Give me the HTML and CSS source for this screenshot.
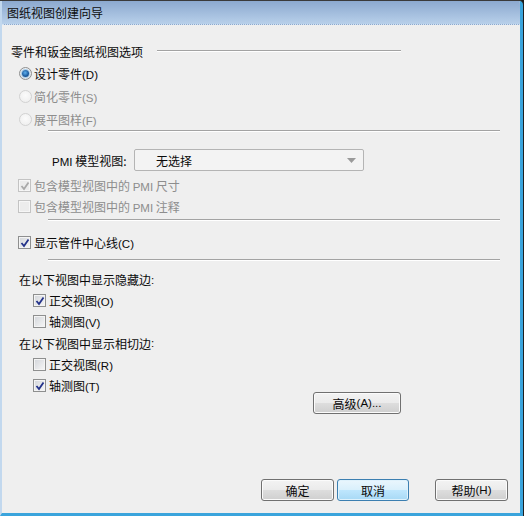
FILE: index.html
```html
<!DOCTYPE html>
<html lang="zh-CN">
<head>
<meta charset="utf-8">
<title>图纸视图创建向导</title>
<link rel="stylesheet" href="styles.css">
</head>
<body>
<div class="window">
  <div class="frame">
    <div class="titlebar">图纸视图创建向导</div>
    <div class="content">
      <div class="group-head">
        <span class="group-title">零件和钣金图纸视图选项</span>
        <span class="group-line"></span>
      </div>
      <div class="row radio-row">
        <span class="radio checked"></span><span class="lbl">设计零件<span class="acc">(D)</span></span>
      </div>
      <div class="row radio-row disabled">
        <span class="radio"></span><span class="lbl">简化零件<span class="acc">(S)</span></span>
      </div>
      <div class="row radio-row disabled">
        <span class="radio"></span><span class="lbl">展平图样<span class="acc">(F)</span></span>
      </div>
      <div class="sep"></div>

      <div class="pmi-row">
        <span class="pmi-label"><span class="acc">PMI</span> 模型视图:</span>
        <div class="select">
          <span class="select-text">无选择</span>
          <svg class="select-arrow" width="9" height="5" viewBox="0 0 9 5"><path d="M0 0H9L4.5 5Z" fill="#9a9a9a"/></svg>
        </div>
      </div>
      <div class="row check-row disabled first-check">
        <span class="check on"><svg width="10" height="10" viewBox="0 0 10 10"><path d="M1.5 5L4 8L8.5 1.5" fill="none" stroke="#a9a9a9" stroke-width="1.8"/></svg></span><span class="lbl">包含模型视图中的 <span class="acc">PMI</span> 尺寸</span>
      </div>
      <div class="row check-row disabled">
        <span class="check"></span><span class="lbl">包含模型视图中的 <span class="acc">PMI</span> 注释</span>
      </div>
      <div class="sep sep-b"></div>

      <div class="row check-row pipe-row">
        <span class="check on"><svg width="10" height="10" viewBox="0 0 10 10"><path d="M1.5 5L4 8L8.5 1.5" fill="none" stroke="#23328a" stroke-width="1.8"/></svg></span><span class="lbl">显示管件中心线<span class="acc">(C)</span></span>
      </div>
      <div class="sep sep-c"></div>

      <div class="row section-label first-label">在以下视图中显示隐藏边<span class="acc">:</span></div>
      <div class="row check-row nested">
        <span class="check on"><svg width="10" height="10" viewBox="0 0 10 10"><path d="M1.5 5L4 8L8.5 1.5" fill="none" stroke="#23328a" stroke-width="1.8"/></svg></span><span class="lbl">正交视图<span class="acc">(O)</span></span>
      </div>
      <div class="row check-row nested">
        <span class="check"></span><span class="lbl">轴测图<span class="acc">(V)</span></span>
      </div>
      <div class="row section-label second-label">在以下视图中显示相切边<span class="acc">:</span></div>
      <div class="row check-row nested">
        <span class="check"></span><span class="lbl">正交视图<span class="acc">(R)</span></span>
      </div>
      <div class="row check-row nested">
        <span class="check on"><svg width="10" height="10" viewBox="0 0 10 10"><path d="M1.5 5L4 8L8.5 1.5" fill="none" stroke="#23328a" stroke-width="1.8"/></svg></span><span class="lbl">轴测图<span class="acc">(T)</span></span>
      </div>
      <div class="adv-row">
        <button class="btn adv">高级<span class="acc">(A)...</span></button>
      </div>

      <div class="footer">
        <button class="btn ok">确定</button>
        <button class="btn focused">取消</button>
        <button class="btn help">帮助<span class="acc">(H)</span></button>
      </div>
    </div>
  </div>
</div>
</body>
</html>
```

FILE: styles.css
```css
* { box-sizing: border-box; }

html, body {
  margin: 0;
  padding: 0;
  background: #1b1b1b;
}

body {
  width: 524px;
  height: 516px;
  font-family: "Noto Sans CJK SC", "Liberation Sans", sans-serif;
  font-size: 12px;
  color: #0a0a0a;
}

.window {
  width: 524px;
  height: 516px;
  border-top: 1px solid #3a3a3a;
  border-right: 1px solid #1e1e1e;
  border-bottom: 1px solid #1e1e1e;
  border-top-right-radius: 5px;
  background: #1e1e1e;
}

.frame {
  width: 523px;
  height: 515px;
  display: flex;
  flex-direction: column;
  background: #efefef;
  border-left: 2px solid #c2d8ee;
  border-right: 3px solid #3aa4dc;
  border-bottom: 3px solid #3aa4dc;
  border-top-right-radius: 4px;
  overflow: hidden;
}

.titlebar {
  height: 24px;
  flex: none;
  display: flex;
  align-items: center;
  padding-left: 5px;
  padding-bottom: 1px;
  background: linear-gradient(#8ca9cf, #b8d0ea);
  border-bottom: 1px dotted #d5e3f2;
  color: #0d0d0d;
  font-size: 12px;
}

.content {
  flex: 1;
  display: flex;
  flex-direction: column;
  padding: 15px 12px 12px 8px;
}

.acc {
  font-family: "Liberation Sans", "DejaVu Sans", sans-serif;
  font-size: 11.5px;
}

.group-head {
  height: 22px;
  display: flex;
  align-items: center;
  margin-left: 1px;
}

.group-title { white-space: nowrap; }

.group-line {
  width: 244px;
  margin-left: 14px;
  height: 2px;
  border-top: 1px solid #a3a3a3;
  border-bottom: 1px solid #ffffff;
}

.row {
  display: flex;
  align-items: center;
  white-space: nowrap;
}

.radio-row {
  height: 23px;
  margin-left: 9px;
}

.disabled { color: #8d8d8d; }

.radio {
  width: 13px;
  height: 13px;
  flex: none;
  border-radius: 50%;
  border: 1px solid #8e8f8f;
  background: radial-gradient(circle at 50% 40%, #ffffff, #d6d9de);
  margin-right: 2px;
  position: relative;
}

.radio.checked::after {
  content: "";
  position: absolute;
  left: 2px;
  top: 2px;
  width: 7px;
  height: 7px;
  border-radius: 50%;
  background: radial-gradient(circle at 45% 40%, #5fb0ee, #1a5a9e 60%, #0d3f78);
  box-shadow: 0 0 0 1px #a8cdea;
}

.disabled .radio {
  border-color: #d2d2d2;
  background: radial-gradient(circle at 50% 40%, #fbfbfb, #ececec);
}

.sep {
  height: 2px;
  margin-left: 38px;
  width: 452px;
  border-top: 1px solid #a3a3a3;
  border-bottom: 1px solid #ffffff;
  margin-top: -1px;
}

.pmi-row {
  margin-top: 17px;
  height: 22px;
  display: flex;
  align-items: center;
  margin-left: 42px;
}

.pmi-label {
  width: 82px;
  white-space: nowrap;
}

.select {
  width: 230px;
  height: 22px;
  border: 1px solid #b4b4b4;
  border-radius: 2px;
  background: #f3f3f3;
  display: flex;
  align-items: center;
  padding-left: 21px;
  padding-right: 7px;
  color: #0a0a0a;
}

.select-text { flex: 1; }

.select-arrow { flex: none; }

.check-row {
  height: 21px;
  margin-left: 8px;
}

.first-check { margin-top: 4px; }

.check {
  width: 13px;
  height: 13px;
  flex: none;
  border: 1px solid #8e8f8f;
  background: linear-gradient(135deg, #d2d5da, #f7f7f7);
  box-shadow: inset 0 0 0 1px #f4f4f4;
  margin-right: 3px;
  display: flex;
  align-items: center;
  justify-content: center;
}

.disabled .check {
  border-color: #c3c3c3;
  background: #ececec;
  box-shadow: inset 0 0 0 1px #f6f6f6;
}

.sep-b { margin-top: 2px; }

.pipe-row { margin-top: 11px; }

.sep-c { margin-top: 6px; }

.section-label {
  margin-left: 9px;
  height: 21px;
}

.first-label { margin-top: 8px; }

.second-label { height: 22px; }

.nested { margin-left: 23px; }

.adv-row {
  display: flex;
  margin-top: -4px;
  padding-left: 303px;
}

.btn {
  font-family: "Noto Sans CJK SC", "Liberation Sans", sans-serif;
  font-size: 12px;
  color: #0a0a0a;
  height: 22px;
  border: 1px solid #707070;
  border-radius: 3px;
  background: linear-gradient(#f3f3f3 0%, #ebebeb 48%, #dddddd 52%, #cfcfcf 100%);
  box-shadow: inset 0 0 0 1px #fbfbfb;
  padding: 0;
  display: flex;
  align-items: center;
  justify-content: center;
}

.adv { width: 88px; }

.footer {
  margin-top: auto;
  display: flex;
  justify-content: flex-end;
}

.footer .btn { width: 73px; }

.footer .btn.focused { width: 72px; margin-left: 3px; }

.footer .btn.help { margin-left: 26px; }

.btn.focused {
  border-color: #3c7fb1;
  background: linear-gradient(#eaf6fd 0%, #d9f0fc 48%, #bee6fd 52%, #a7d9f5 100%);
  box-shadow: inset 0 0 0 1px #dff2fc;
}
```
